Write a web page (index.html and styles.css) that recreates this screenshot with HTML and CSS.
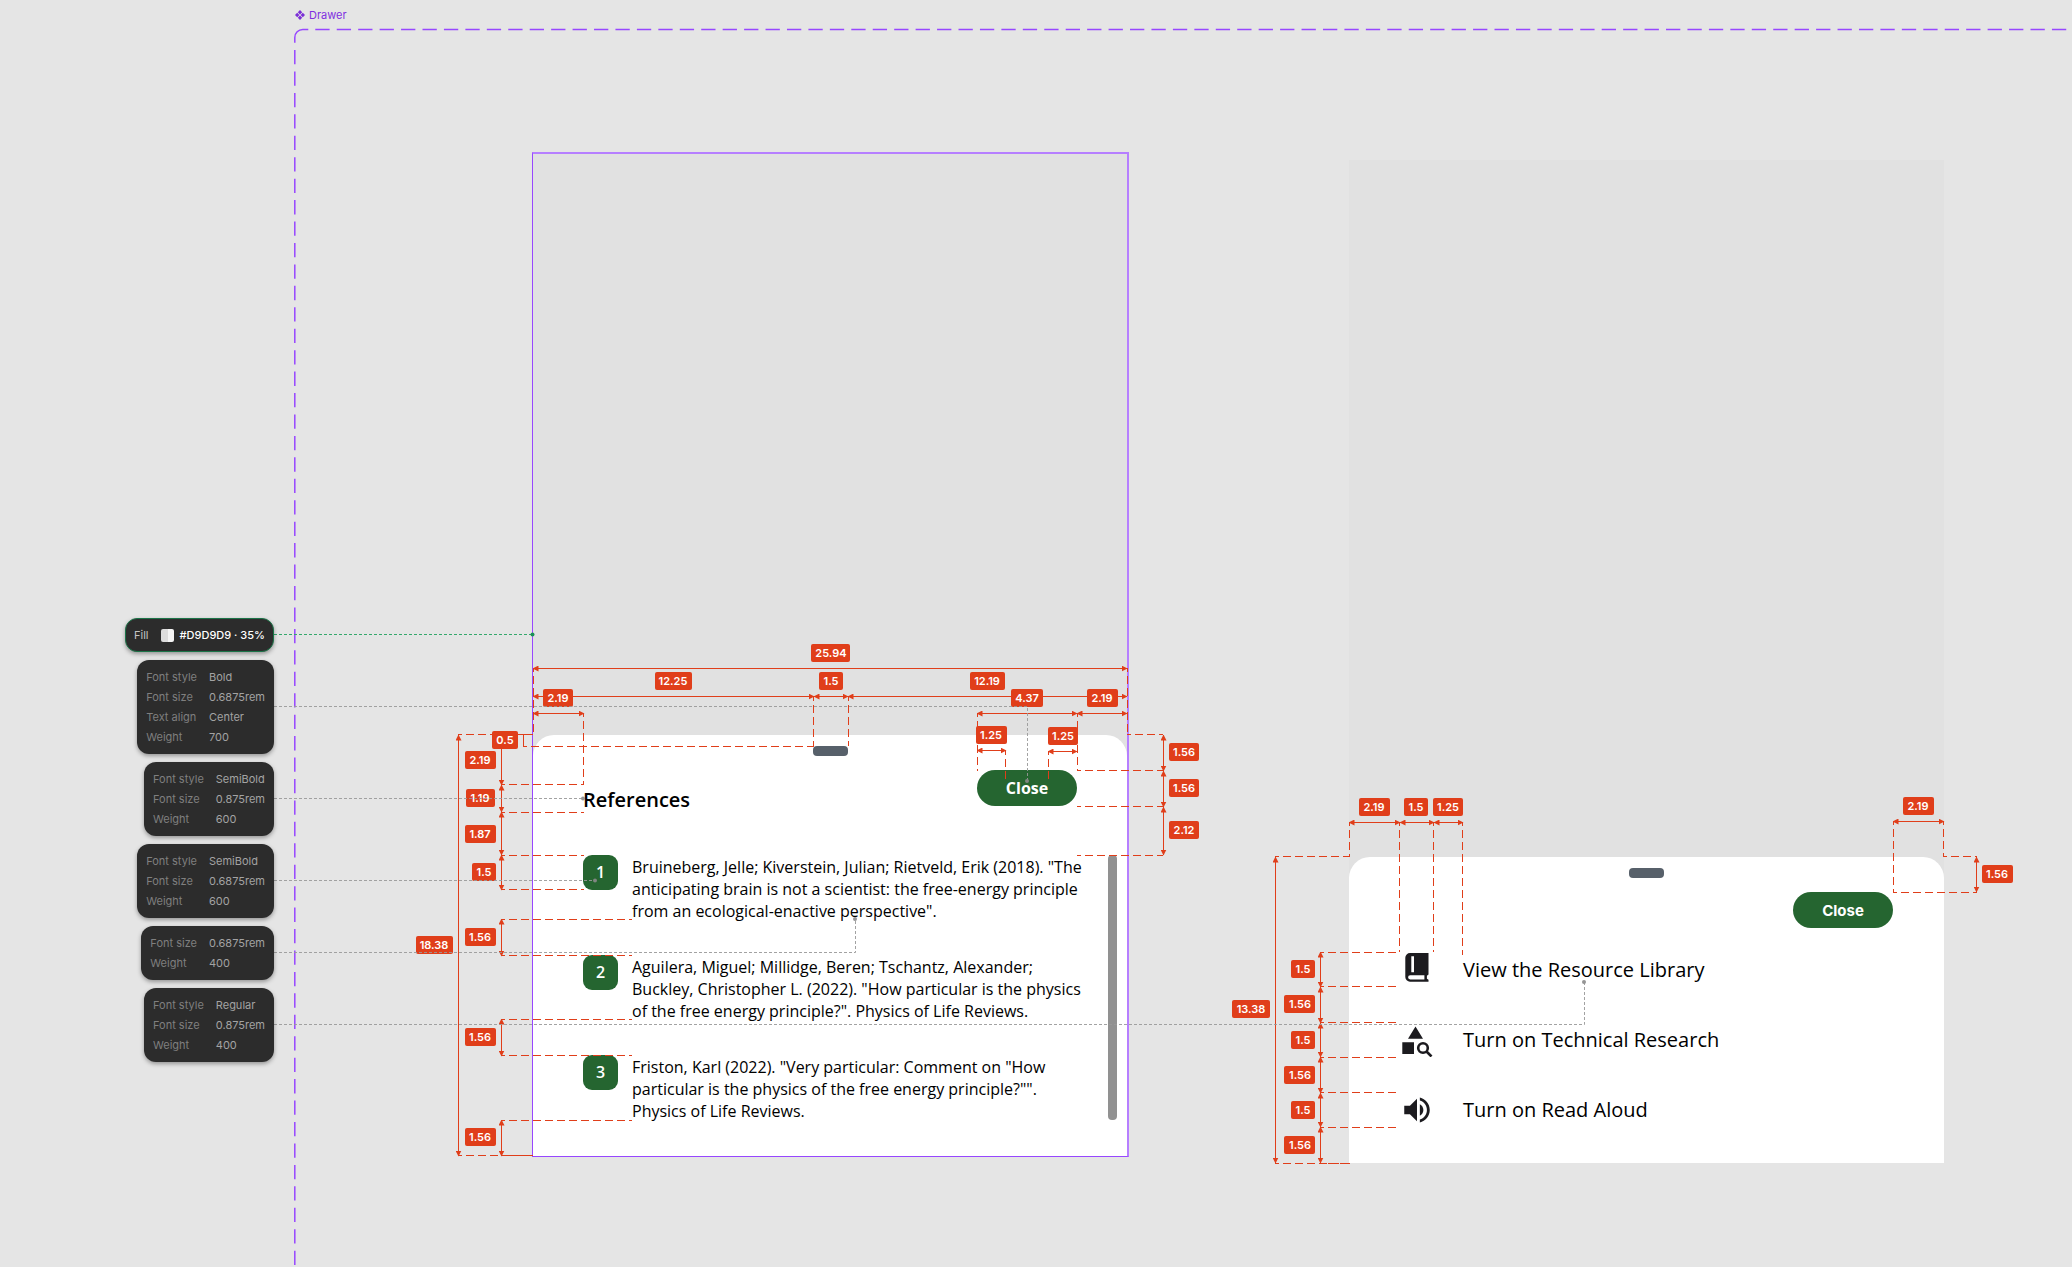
FILE: index.html
```html
<!DOCTYPE html>
<html lang="en">
<head>
    <meta charset="UTF-8">
    <meta name="viewport" content="width=device-width, initial-scale=1.0">
    <title>Drawer</title>
    <link rel="stylesheet" href="styles.css">
</head>
<body>
<main class="canvas">
    <!-- Component set outline -->
    <svg class="layer outline" aria-hidden="true">
        <path d="M294.8 42.7V37.5a8 8 0 0 1 8-8h5.5"/>
        <line x1="315.3" y1="29.6" x2="100%" y2="29.6"/>
        <line x1="294.8" y1="50" x2="294.8" y2="100%"/>
    </svg>

    <div class="component-name">
        <svg width="10" height="10" viewBox="0 0 10 10" aria-hidden="true">
            <path d="M5 0l2.2 2.2L5 4.400 2.800 2.200zM5 5.600l2.200 2.200L5 10 2.800 7.800zM2.200 2.800L4.400 5 2.200 7.200 0 5zM7.800 2.800L10 5 7.800 7.200 5.600 5z"/>
        </svg>
        <span>Drawer</span>
    </div>

    <!-- Drawer: references -->
    <section class="frame frame-references">
        <div class="sheet">
            <div class="handle"></div>
            <header class="sheet-header">
                <h1>References</h1>
                <button type="button" class="close">Close</button>
            </header>
            <div class="sheet-body">
                <ol class="references">
                    <li><span class="number">1</span><p>Bruineberg, Jelle; Kiverstein, Julian; Rietveld, Erik (2018). "The<br>anticipating brain is not a scientist: the free-energy principle<br>from an ecological-enactive perspective".</p></li>
                    <li><span class="number">2</span><p>Aguilera, Miguel; Millidge, Beren; Tschantz, Alexander;<br>Buckley, Christopher L. (2022). "How particular is the physics<br>of the free energy principle?". Physics of Life Reviews.</p></li>
                    <li><span class="number">3</span><p>Friston, Karl (2022). "Very particular: Comment on "How<br>particular is the physics of the free energy principle?"".<br>Physics of Life Reviews.</p></li>
                </ol>
                <div class="scrollbar"></div>
            </div>
        </div>
    </section>

    <!-- Drawer: menu -->
    <section class="frame frame-menu">
        <div class="sheet">
            <div class="handle"></div>
            <header class="sheet-header">
                <button type="button" class="close close-alt">Close</button>
            </header>
            <ul class="menu">
                <li><a href="#library">
                    <svg width="34" height="34" viewBox="0 0 34 34" aria-hidden="true">
                        <path fill-rule="evenodd" d="M10 0h18.500v21.500l-1.600 1.300v3l1.600.9v2H10a4.700 4.700 0 0 1-4.700-4.700V4.700A4.700 4.700 0 0 1 10 0zM11.300 3.300v16H14v-16zM10.200 22.200a2.100 2.100 0 1 0 0 4.200h14.200v-4.200z"/>
                    </svg>
                    View the Resource Library</a></li>
                <li><a href="#research">
                    <svg width="34" height="34" viewBox="0 0 34 34" aria-hidden="true">
                        <path d="M15.500 3.500L23 15.700H8zM2.300 19.300H14v11.800H2.300z"/>
                        <circle class="lens" cx="23" cy="25" r="4.800"/>
                        <path class="lens" d="M26.500 28.500l5 5"/>
                    </svg>
                    Turn on Technical Research</a></li>
                <li><a href="#read-aloud">
                    <svg width="34" height="34" viewBox="0 0 24 24" aria-hidden="true">
                        <path d="M3 9v6h4l5 5V4L7 9H3zM16.500 12c0-1.770-1.020-3.290-2.500-4.030v8.050c1.480-.73 2.500-2.250 2.500-4.020zM14 3.230v2.060c2.890.86 5 3.540 5 6.710s-2.110 5.850-5 6.710v2.060c4.010-.91 7-4.490 7-8.770s-2.990-7.860-7-8.770z"/>
                    </svg>
                    Turn on Read Aloud</a></li>
            </ul>
        </div>
    </section>

    <!-- Measurements -->
    <svg class="layer measures">
        <defs>
            <marker id="arrow" viewBox="0 0 6 6" refX="5.500" refY="3" markerWidth="6" markerHeight="6" orient="auto-start-reverse">
                <path d="M0 0l6 3-6 3z"/>
            </marker>
        </defs>

        <g class="guides">
            <path d="M458 734.500H533M523 746.500H814M501 784.500H584M501 812.500H584M501 855.500H584M501 889.500H584"/>
            <path d="M501 919.500H632M501 955.500H632M501 1019.500H632M501 1055.500H632M501 1120.500H632M458 1155.500H533M501 1155.500H533"/>
            <path d="M533.500 668V735M583.500 713V785M813.500 697V746M848.500 697V746M977.500 713V771M1005.500 751V781M1048.500 751V781M1077.500 713V771M1127.500 668V735"/>
            <path d="M1127 734.500H1163M1077 770.500H1163M1077 806.500H1163M1077 855.500H1163"/>
            <path d="M1275 856.500H1350M1275 1163.500H1350M1320 952.500H1400M1320 986.500H1400M1320 1022.500H1400M1320 1057.500H1400M1320 1092.500H1400M1320 1127.500H1400M1320 1163.500H1350"/>
            <path d="M1349.500 822V857M1399.500 822V952M1433.500 822V952M1462.500 822V955"/>
            <path d="M1893.500 821V892M1943.500 821V857M1943 856.500H1977M1893 892.500H1977"/>
        </g>

        <g class="spans">
            <path d="M533 668.500H1127"/><path d="M533 696.500H814"/><path d="M814 696.500H848"/><path d="M848 696.500H1127"/>
            <path d="M533 713.500H584"/><path d="M977 713.500H1077"/><path d="M1077 713.500H1127"/>
            <path d="M977 750.500H1006"/><path d="M1048 751.500H1077"/>
            <path d="M501.500 735V785"/><path d="M501.500 785V812"/><path d="M501.500 812V855"/><path d="M501.500 855V890"/>
            <path d="M501.500 919V956"/><path d="M501.500 1019V1056"/><path d="M501.500 1120V1156"/>
            <path d="M458.500 735V1156"/>
            <path d="M1163.500 735V771"/><path d="M1163.500 771V807"/><path d="M1163.500 807V855"/>
            <path d="M1275.500 857V1163"/>
            <path d="M1320.500 952V987"/><path d="M1320.500 987V1023"/><path d="M1320.500 1023V1057"/><path d="M1320.500 1057V1093"/><path d="M1320.500 1093V1127"/><path d="M1320.500 1127V1163"/>
            <path d="M1349 822.500H1400"/><path d="M1400 822.500H1434"/><path d="M1434 822.500H1463"/>
            <path d="M1893 821.500H1944"/><path d="M1976.500 857V892"/>
        </g>
        <path class="bracket" d="M517 734.500H526M523.500 735V746"/>

        <g class="tags">
            <rect x="811" y="644" width="39" height="18" rx="2"/><text x="831" y="657">25.94</text>
            <rect x="655" y="672" width="37" height="18" rx="2"/><text x="673" y="685">12.25</text>
            <rect x="819" y="672" width="24" height="18" rx="2"/><text x="831" y="685">1.5</text>
            <rect x="970" y="672" width="35" height="18" rx="2"/><text x="987" y="685">12.19</text>
            <rect x="543" y="689" width="30" height="18" rx="2"/><text x="558" y="702">2.19</text>
            <rect x="1011" y="689" width="32" height="18" rx="2"/><text x="1027" y="702">4.37</text>
            <rect x="1087" y="689" width="31" height="18" rx="2"/><text x="1102" y="702">2.19</text>
            <rect x="492" y="731" width="26" height="18" rx="2"/><text x="505" y="744">0.5</text>
            <rect x="465" y="751" width="31" height="18" rx="2"/><text x="480" y="764">2.19</text>
            <rect x="466" y="789" width="29" height="18" rx="2"/><text x="480" y="802">1.19</text>
            <rect x="465" y="825" width="31" height="18" rx="2"/><text x="480" y="838">1.87</text>
            <rect x="472" y="863" width="24" height="18" rx="2"/><text x="484" y="876">1.5</text>
            <rect x="465" y="928" width="31" height="18" rx="2"/><text x="480" y="941">1.56</text>
            <rect x="465" y="1028" width="31" height="18" rx="2"/><text x="480" y="1041">1.56</text>
            <rect x="465" y="1128" width="31" height="18" rx="2"/><text x="480" y="1141">1.56</text>
            <rect x="416" y="936" width="37" height="18" rx="2"/><text x="434" y="949">18.38</text>
            <rect x="976" y="726" width="31" height="18" rx="2"/><text x="991" y="739">1.25</text>
            <rect x="1048" y="727" width="30" height="18" rx="2"/><text x="1063" y="740">1.25</text>
            <rect x="1169" y="743" width="30" height="18" rx="2"/><text x="1184" y="756">1.56</text>
            <rect x="1169" y="779" width="30" height="18" rx="2"/><text x="1184" y="792">1.56</text>
            <rect x="1169" y="821" width="30" height="18" rx="2"/><text x="1184" y="834">2.12</text>
            <rect x="1359" y="798" width="31" height="18" rx="2"/><text x="1374" y="811">2.19</text>
            <rect x="1404" y="798" width="24" height="18" rx="2"/><text x="1416" y="811">1.5</text>
            <rect x="1433" y="798" width="30" height="18" rx="2"/><text x="1448" y="811">1.25</text>
            <rect x="1291" y="960" width="24" height="18" rx="2"/><text x="1303" y="973">1.5</text>
            <rect x="1284" y="995" width="31" height="18" rx="2"/><text x="1300" y="1008">1.56</text>
            <rect x="1291" y="1031" width="24" height="18" rx="2"/><text x="1303" y="1044">1.5</text>
            <rect x="1284" y="1066" width="31" height="18" rx="2"/><text x="1300" y="1079">1.56</text>
            <rect x="1291" y="1101" width="24" height="18" rx="2"/><text x="1303" y="1114">1.5</text>
            <rect x="1284" y="1136" width="31" height="18" rx="2"/><text x="1300" y="1149">1.56</text>
            <rect x="1232" y="1000" width="38" height="18" rx="2"/><text x="1251" y="1013">13.38</text>
            <rect x="1903" y="797" width="31" height="18" rx="2"/><text x="1918" y="810">2.19</text>
            <rect x="1982" y="865" width="31" height="18" rx="2"/><text x="1997" y="878">1.56</text>
        </g>

        <!-- Note connectors -->
        <g class="connectors">
            <path d="M274 706.500H1027.500V781M274 798.500H583M274 880.500H595M274 952.500H855.500V919M274 1024.500H1584.500V982"/>
            <circle cx="1027" cy="781" r="2"/>
            <circle cx="583" cy="798.500" r="2"/>
            <circle cx="595" cy="880.500" r="2"/>
            <circle cx="855" cy="919" r="2"/>
            <circle cx="1584" cy="982" r="2"/>
        </g>
        <g class="connectors connectors-fill">
            <path d="M274 634.500H533"/>
            <circle cx="532.500" cy="634.500" r="2"/>
        </g>
    </svg>

    <!-- Property notes -->
    <aside class="notes">
        <dl class="note note-fill">
            <dt>Fill</dt><dd><span class="swatch"></span>#D9D9D9 · 35%</dd>
        </dl>
        <dl class="note">
            <dt>Font style</dt><dd>Bold</dd>
            <dt>Font size</dt><dd>0.6875rem</dd>
            <dt>Text align</dt><dd>Center</dd>
            <dt>Weight</dt><dd>700</dd>
        </dl>
        <dl class="note">
            <dt>Font style</dt><dd>SemiBold</dd>
            <dt>Font size</dt><dd>0.875rem</dd>
            <dt>Weight</dt><dd>600</dd>
        </dl>
        <dl class="note">
            <dt>Font style</dt><dd>SemiBold</dd>
            <dt>Font size</dt><dd>0.6875rem</dd>
            <dt>Weight</dt><dd>600</dd>
        </dl>
        <dl class="note">
            <dt>Font size</dt><dd>0.6875rem</dd>
            <dt>Weight</dt><dd>400</dd>
        </dl>
        <dl class="note">
            <dt>Font style</dt><dd>Regular</dd>
            <dt>Font size</dt><dd>0.875rem</dd>
            <dt>Weight</dt><dd>400</dd>
        </dl>
    </aside>
</main>
</body>
</html>
```
FILE: styles.css
```css
* {
    box-sizing: border-box;
}

body {
    margin: 0;
    font-family: "Open Sans", "Noto Sans", sans-serif;
    background-color: #e5e5e5;
    color: #000;
}

h1, p, ol, ul, dl, dd {
    margin: 0;
    padding: 0;
}

ol, ul {
    list-style: none;
}

.canvas {
    position: relative;
    min-height: 100vh;
    overflow: hidden;
}

.layer {
    position: absolute;
    top: 0;
    left: 0;
    width: 100%;
    height: 100%;
    pointer-events: none;
}

/* Component set */
.outline {
    fill: none;
    stroke: #9747ff;
    stroke-width: 1.5;
}

.outline line {
    stroke-dasharray: 14.3 7.14;
}

.component-name {
    position: absolute;
    top: 8px;
    left: 295px;
    display: flex;
    align-items: center;
    gap: 4px;
    font: 400 11px/14px Inter, sans-serif;
    color: #8030e0;
}

.component-name svg {
    fill: #7b2fd6;
}

/* Drawers */
.frame {
    position: absolute;
    display: flex;
    flex-direction: column;
    justify-content: flex-end;
    background: rgba(217, 217, 217, 0.35);
}

.frame-references {
    top: 152px;
    left: 532px;
    width: 597px;
    height: 1005px;
    border: 1px solid #9747ff;
    border-top: 2px solid #b67fff;
    border-right: 2px solid #b67fff;
}

.frame-menu {
    top: 160px;
    left: 1349px;
    width: 595px;
    height: 1003px;
}

.sheet {
    padding: 11px 50px 34px;
    border-radius: 21px 21px 0 0;
    background: #fff;
}

.frame-menu .sheet {
    padding: 11px 51px 36px;
}

.handle {
    width: 35px;
    height: 10px;
    margin: 0 auto;
    border-radius: 4px;
    background: #57606a;
}

.sheet-header {
    display: flex;
    justify-content: flex-end;
    margin-top: 14px;
}

.sheet-header h1 {
    flex: 1;
    padding-top: 16px;
    font-size: 20px;
    font-weight: 600;
    line-height: 27px;
}

.close {
    width: 100px;
    height: 36px;
    border: none;
    border-radius: 18px;
    background: #256530;
    color: #fff;
    font-family: inherit;
    font-size: 16px;
    font-weight: 700;
    cursor: pointer;
}

.close-alt {
    font-family: Inter, sans-serif;
    font-size: 15px;
}

.sheet-body {
    display: flex;
    justify-content: space-between;
    margin: 42px -40px 0 0;
}

.references {
    display: flex;
    flex-direction: column;
    gap: 33px;
}

.references li {
    display: flex;
    gap: 14px;
    font-size: 16px;
    line-height: 22px;
    white-space: nowrap;
}

.references p {
    padding-top: 1px;
}

.number {
    flex: none;
    width: 35px;
    height: 35px;
    border-radius: 9px;
    background: #256530;
    color: #fff;
    font-weight: 600;
    line-height: 35px;
    text-align: center;
}

.scrollbar {
    width: 9px;
    margin-bottom: 2px;
    border-radius: 4px;
    background: #919191;
}

.menu {
    display: flex;
    flex-direction: column;
    gap: 36px;
    margin-top: 25px;
}

.menu a {
    display: flex;
    align-items: center;
    gap: 29px;
    color: #000;
    font-size: 20px;
    line-height: 34px;
    text-decoration: none;
}

.menu svg {
    fill: #1c1b1f;
}

.menu .lens {
    fill: none;
    stroke: #1c1b1f;
    stroke-width: 2.6;
}

/* Measurements */
.guides {
    fill: none;
    stroke: #e03e1a;
    stroke-dasharray: 8 4;
    stroke-dashoffset: 4;
}

.spans {
    fill: none;
    stroke: #e03e1a;
}

.spans path {
    marker-start: url(#arrow);
    marker-end: url(#arrow);
}

.bracket {
    fill: none;
    stroke: #e03e1a;
}

#arrow path {
    fill: #e03e1a;
    stroke: none;
    marker: none;
}

.tags rect {
    fill: #e03e1a;
}

.tags text {
    fill: #fff;
    font: 600 11px Inter, sans-serif;
    text-anchor: middle;
}

.connectors {
    fill: #8a8a8a;
    opacity: 0.9;
}

.connectors path {
    fill: none;
    stroke: #999;
    stroke-dasharray: 3 2;
}

.connectors-fill {
    fill: #1a9155;
    opacity: 1;
}

.connectors-fill path {
    stroke: #35a86c;
}

/* Notes */
.notes {
    position: absolute;
    top: 618px;
    left: 0;
    width: 274px;
    display: flex;
    flex-direction: column;
    align-items: flex-end;
    gap: 8px;
    font: 400 11px/20px Inter, sans-serif;
}

.note {
    display: grid;
    grid-template-columns: auto auto;
    column-gap: 12px;
    padding: 7px 9px;
    border-radius: 12px;
    background: #2c2c2c;
    box-shadow: 0 2px 4px rgba(0, 0, 0, 0.35);
    color: #a3a3a3;
}

.note dt {
    color: #7f7f7f;
}

.note-fill {
    padding: 6px 8px;
    border: 1px solid #1b7448;
    color: #fff;
    font-weight: 500;
}

.note-fill dt {
    color: #c4c4c4;
    font-weight: 400;
}

.note-fill dd {
    display: flex;
    align-items: center;
    gap: 6px;
}

.swatch {
    width: 13px;
    height: 13px;
    border-radius: 2px;
    background: linear-gradient(90deg, #dcdcdc 50%, #f4f4f4 50%);
}
```
